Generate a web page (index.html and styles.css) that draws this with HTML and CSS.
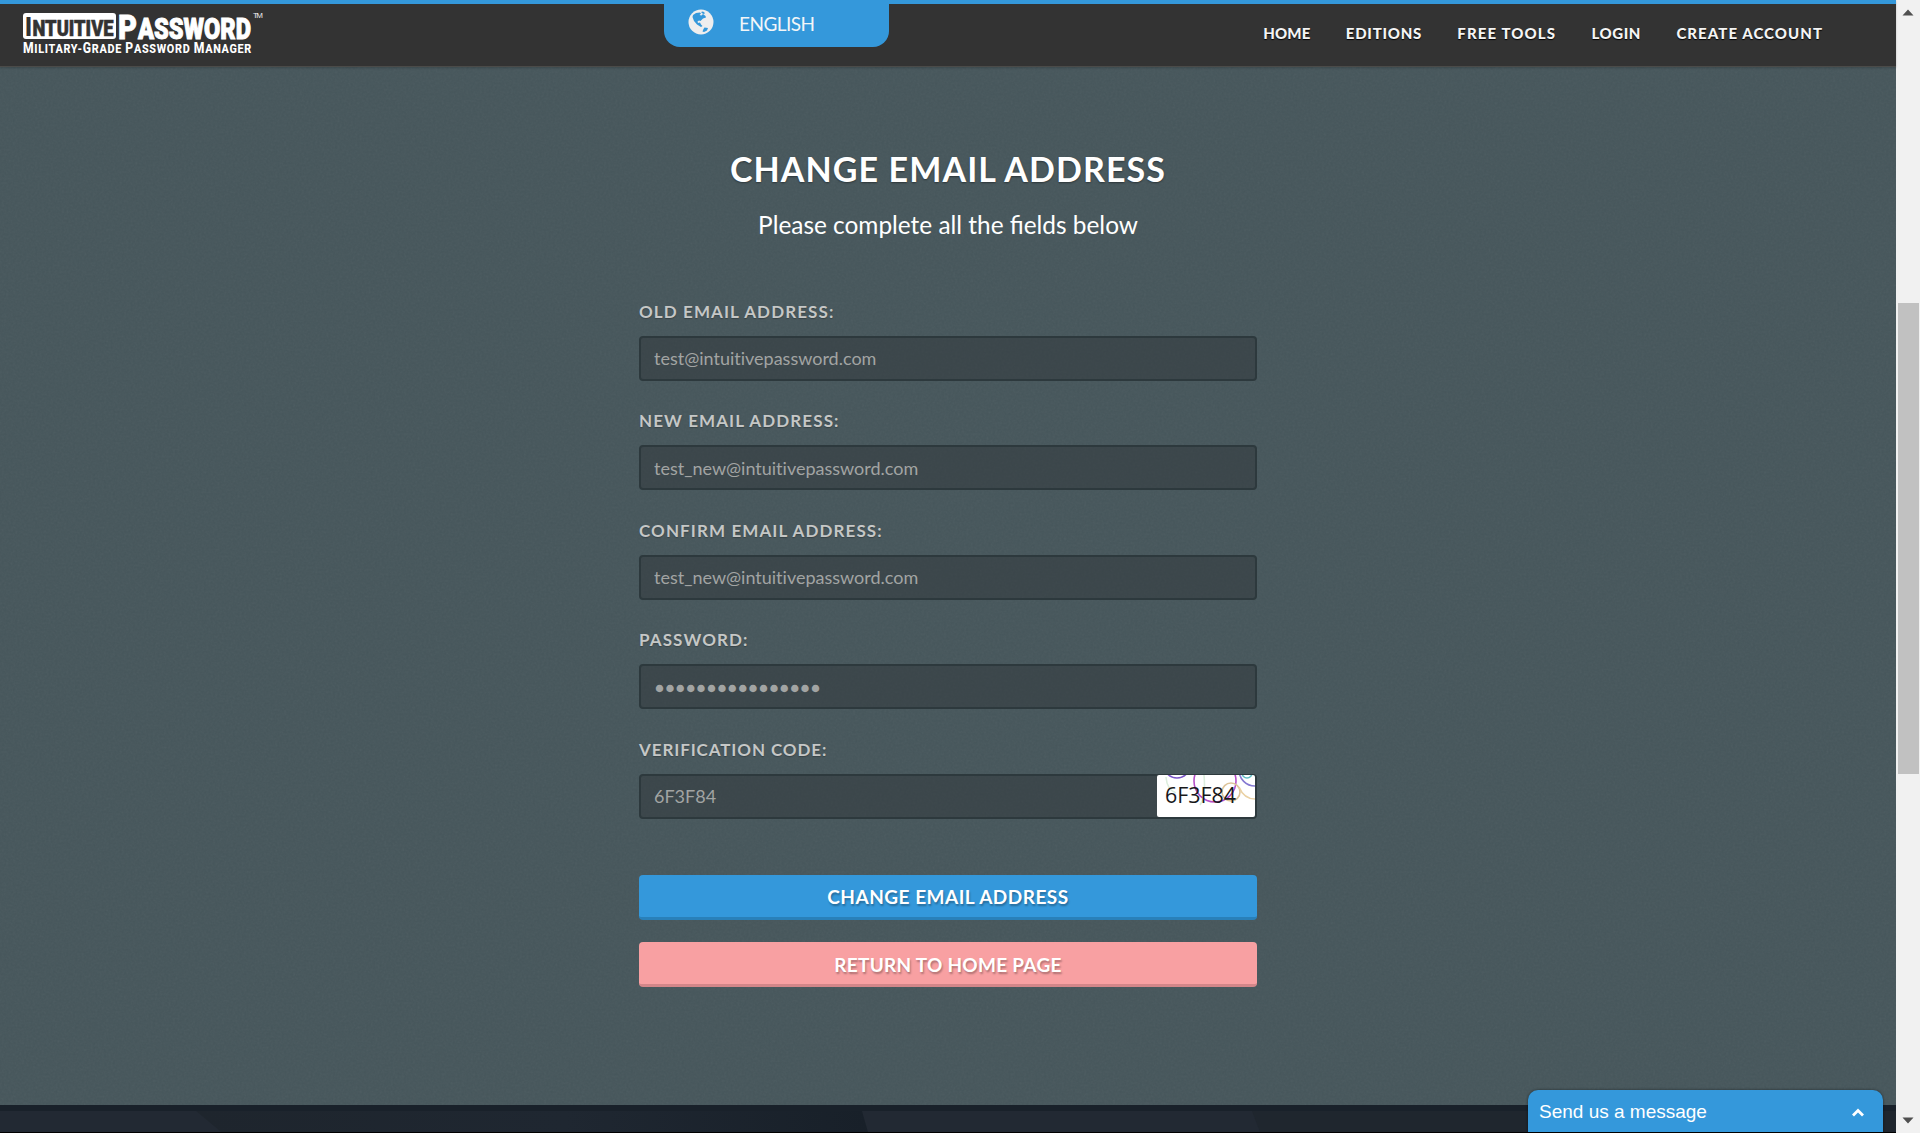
FILE: index.html
```
<!DOCTYPE html>
<html lang="en">
<head>
<meta charset="utf-8">
<title>Intuitive Password</title>
<link rel="stylesheet" href="styles.css">
</head>
<body>
<div class="page">
  <header class="header">
    <svg class="logo" width="246" height="44" viewBox="0 0 246 44" role="img" aria-label="Intuitive Password">
      <rect x="1" y="1" width="93" height="26" rx="3" fill="#fff"/>
      <g class="logo-text">
        <text x="3" y="23.500" font-size="26" textLength="7" lengthAdjust="spacingAndGlyphs" fill="#333">I</text>
        <text x="10.500" y="23.500" font-size="21.500" textLength="81" lengthAdjust="spacingAndGlyphs" fill="#333" stroke="#333" stroke-width=".6">NTUITIVE</text>
        <text x="96" y="26.500" font-size="34" textLength="19" lengthAdjust="spacingAndGlyphs" fill="#fff" stroke="#fff" stroke-width=".8">P</text>
        <text x="116" y="26.500" font-size="29" textLength="113" lengthAdjust="spacingAndGlyphs" fill="#fff" stroke="#fff" stroke-width="1">ASSWORD</text>
        <text class="tagline" x="1" y="41" font-size="14" textLength="229" lengthAdjust="spacingAndGlyphs" fill="#fff">M<tspan font-size="12.500">ILITARY-</tspan>G<tspan font-size="12.500">RADE </tspan>P<tspan font-size="12.500">ASSWORD </tspan>M<tspan font-size="12.500">ANAGER</tspan></text>
      </g>
      <text class="tm" x="231" y="6" font-size="8" textLength="10" fill="#eee">TM</text>
    </svg>
    <div class="language">
      <svg width="26" height="26" viewBox="0 0 26 26">
        <circle cx="13" cy="13" r="12.500" fill="#eee"/>
        <path fill="#3498db" d="M5 6 8 4l4-.5 1 1-1.500 1.500 2 .5 1.500-1.500 2.500 2 .5 1.500-3 1-2.500 2.500-1.500-.5-1.500 1 .5 1.500 2-.5 1 2 1.500 1.500-1.500 1-4-2.500-3-3.500-1.500-4zM15.500 20l1-1.500 3.500.5-1 2.500-3 1.500-1.500-.5zM13 3l2-.5 2 1.500-1 1-1.500-.5z"/>
      </svg>
      <span>ENGLISH</span>
    </div>
    <nav class="nav">
      <a class="home">HOME</a><a class="editions">EDITIONS</a><a class="tools">FREE TOOLS</a><a class="login">LOGIN</a><a class="create">CREATE ACCOUNT</a>
    </nav>
  </header>
  <main class="main">
    <svg class="grain" aria-hidden="true">
      <filter id="noise"><feTurbulence type="fractalNoise" baseFrequency=".45" numOctaves="2" seed="4"/><feColorMatrix type="saturate" values="0"/></filter>
      <rect width="100%" height="100%" filter="url(#noise)"/>
    </svg>
    <form class="form">
      <h1>CHANGE EMAIL ADDRESS</h1>
      <p class="lead">Please complete all the fields below</p>
      <label><span>OLD EMAIL ADDRESS:</span><input value="test@intuitivepassword.com"></label>
      <label><span>NEW EMAIL ADDRESS:</span><input value="test_new@intuitivepassword.com"></label>
      <label><span>CONFIRM EMAIL ADDRESS:</span><input value="test_new@intuitivepassword.com"></label>
      <label><span>PASSWORD:</span><input class="password" value="●●●●●●●●●●●●●●●●"></label>
      <label><span class="code">VERIFICATION CODE:</span><input value="6F3F84">
        <svg class="captcha" width="98" height="42" viewBox="0 0 98 42">
          <rect width="98" height="42" fill="#fff"/>
          <g fill="none" stroke-width="1.600">
            <circle cx="20" cy="-10" r="13" stroke="#7a55c8"/>
            <circle cx="58" cy="6" r="21" stroke="#b64fc8"/>
            <circle cx="98" cy="-5" r="16" stroke="#8579d2"/>
            <circle cx="90" cy="-2" r="5" stroke="#62bcc5"/>
            <circle cx="74" cy="17" r="9" stroke="#ddc49b"/>
            <path d="M82 12q5 12 16 12" stroke="#ead1a3"/>
            <path d="M9 2q1 13 10 16M47 0q2 22-4 30" stroke="#dceedd"/>
          </g>
          <text x="8" y="28" font-size="22" textLength="71" lengthAdjust="spacingAndGlyphs">6F3F84</text>
        </svg>
      </label>
      <button class="primary" type="button">CHANGE EMAIL ADDRESS</button>
      <button class="return" type="button">RETURN TO HOME PAGE</button>
    </form>
  </main>
  <footer class="footer">
    <svg width="1896" height="21" viewBox="0 0 1896 21">
      <defs><linearGradient id="shade"><stop offset="0" stop-color="#1e252d"/><stop offset=".55" stop-color="#1f2731"/><stop offset="1" stop-color="#182029"/></linearGradient></defs>
      <rect width="1896" height="21" fill="#222933"/>
      <path d="M196 0h666l6 21H221z" fill="url(#shade)"/>
      <path d="M1252 0h644v21h-636z" fill="#1f262e"/>
    </svg>
  </footer>
</div>
<div class="scrollbar">
  <svg width="24" height="1133" viewBox="0 0 24 1133">
    <path d="M6.500 15.500 12 9.500l5.500 6zM6.500 1117.500h11l-5.500 6z" fill="#505050"/>
    <rect x="2" y="303" width="21" height="471" fill="#c1c1c1"/>
  </svg>
</div>
<aside class="chat"><span>Send us a message</span>
  <svg width="14" height="12" viewBox="0 0 14 12"><path d="M2 9.500l5-5 5 5" fill="none" stroke="#fff" stroke-width="2.800"/></svg>
</aside>
</body>
</html>
```
FILE: styles.css
```
* { box-sizing: border-box; }
body { margin: 0; height: 1133px; overflow: hidden; display: flex; background: #000; font-family: Lato, sans-serif; }
.page { width: 1896px; height: 1132px; display: flex; flex-direction: column; }
.header { height: 67px; flex: none; display: grid; grid-template-columns: 642px 225px 1fr; align-items: start; padding-left: 22px; background: #333; border-top: 4px solid #3498db; border-bottom: 1px solid #4b4b49; position: relative; z-index: 1; box-shadow: 0 1px 2px rgba(0,0,0,.2); }
.logo { margin-top: 8px; overflow: visible; }
.logo-text { font-family: Roboto, sans-serif; font-weight: 900; }
.logo-text .tagline { font-weight: 800; letter-spacing: .8px; }
.tm { font-family: "Liberation Sans", sans-serif; }
.language { height: 43px; display: flex; align-items: flex-start; padding: 5px 24px; gap: 25px; background: #3498db; color: #f2f6f8; border-radius: 0 0 16px 16px; font-size: 19px; line-height: 29px; letter-spacing: -.55px; }
.nav { display: flex; justify-content: flex-end; padding: 17px 73px 0 0; gap: 35.3px; font-size: 15px; line-height: 24px; font-weight: 900; letter-spacing: .75px; color: #f4f4f4; text-shadow: 0 1px 1px #000; }
.home { letter-spacing: .15px; }
.login { letter-spacing: .6px; }
.tools { letter-spacing: 1.1px; }
.create { letter-spacing: 1.05px; }
.main { flex: none; height: 1038px; background: #46565b; position: relative; display: flex; justify-content: center; }
.grain { position: absolute; width: 100%; height: 100%; opacity: .055; }
.form { position: relative; width: 618px; padding-top: 76px; display: flex; flex-direction: column; }
h1 { margin: 0; height: 52px; line-height: 52px; font-size: 34px; letter-spacing: 1.100px; text-align: center; color: #fff; white-space: nowrap; text-shadow: 0 1px 2px rgba(0,0,0,.4); }
.lead { margin: 10px 0 0; height: 40px; line-height: 40px; font-size: 24.400px; text-align: center; color: #fff; }
label { margin-bottom: 23.500px; height: 86px; display: flex; flex-direction: column; justify-content: space-between; font-size: 17px; font-weight: 700; color: #c5c7c6; letter-spacing: 1.100px; position: relative; }
.lead + label { margin-top: 49.500px; }
label span { line-height: 34px; text-shadow: 0 1px 1px rgba(0,0,0,.25); }
.code { letter-spacing: .9px; }
input { width: 100%; height: 45px; border: 2px solid #2d393d; border-radius: 4px; background: rgba(48,54,57,.5); color: #a2a4a3; font: 18px Lato, sans-serif; font-variant-ligatures: none; padding: 0 13px; outline: 0; }
.password { font-size: 15px; letter-spacing: 1.400px; padding-left: 14px; }
.captcha { position: absolute; right: 2px; bottom: 2px; border-radius: 2px; font-family: "Open Sans", sans-serif; fill: #18181a; letter-spacing: 0; font-weight: 400; }
button { height: 45px; border: 0; border-bottom: 3px solid; border-radius: 4px; color: #fff; font: 700 19px Lato, sans-serif; letter-spacing: .5px; padding: 2px 0 0; text-shadow: 1px 2px 2px rgba(0,0,0,.3); }
.primary { margin-top: 32.500px; background: #3498db; border-color: #2980b9; }
.return { margin-top: 22.500px; background: #f8a0a2; border-color: #d38689; letter-spacing: .27px; }
.footer { flex: none; height: 27px; padding-top: 6px; background: #19212a; }
.footer svg { display: block; }
.scrollbar { width: 24px; background: #f1f1f1; }
.chat { position: absolute; left: 1528px; bottom: 1px; width: 355px; height: 42px; display: flex; justify-content: space-between; align-items: center; padding: 2px 18px 0 11px; background: #3498db; color: #fff; font: 19px "Liberation Sans", sans-serif; border-radius: 10px 10px 0 0; box-shadow: 0 0 3px rgba(0,0,0,.5); }
```
